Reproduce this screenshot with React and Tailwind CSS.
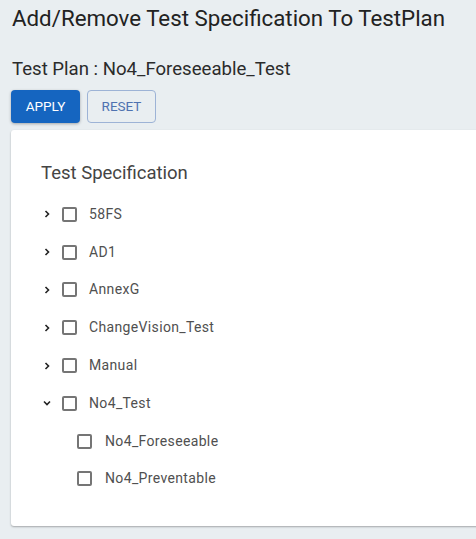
import React from "react";

const items = [
  { name: "58FS", level: 0, chevron: "right" },
  { name: "AD1", level: 0, chevron: "right" },
  { name: "AnnexG", level: 0, chevron: "right" },
  { name: "ChangeVision_Test", level: 0, chevron: "right" },
  { name: "Manual", level: 0, chevron: "right" },
  { name: "No4_Test", level: 0, chevron: "down" },
  { name: "No4_Foreseeable", level: 1 },
  { name: "No4_Preventable", level: 1 },
];

function Chevron({ dir }) {
  return (
    <svg width="10" height="10" viewBox="0 0 10 10" className="shrink-0">
      {dir === "right" ? (
        <path d="M3.5 2 L6.5 5 L3.5 8" fill="none" stroke="#222" strokeWidth="1.6" />
      ) : (
        <path d="M2 3.5 L5 6.5 L8 3.5" fill="none" stroke="#222" strokeWidth="1.6" />
      )}
    </svg>
  );
}

function Box() {
  return <span className="block w-[15px] h-[15px] border-2 border-[#757575] rounded-[2px] bg-white shrink-0" />;
}

export default function App() {
  return (
    <div
      className="w-[476px] h-[539px] overflow-hidden bg-[#e9eef1]"
      style={{ fontFamily: "Roboto, 'Noto Sans CJK JP', sans-serif" }}
    >
      <h1 className="pl-[12px] pt-[3px] text-[22.3px] leading-[30px] text-[#222] font-normal">
        Add/Remove Test Specification To TestPlan
      </h1>
      <div className="pl-[12px] mt-[24px] text-[18.6px] leading-[24px] text-[#2b2b2b]">
        Test Plan : No4_Foreseeable_Test
      </div>
      <div className="flex gap-[7px] pl-[11px] mt-[9px]">
        <button className="w-[69px] h-[33px] rounded-[4px] bg-[#1565c0] text-white text-[13.5px] font-normal shadow-[0_1px_3px_rgba(0,0,0,0.3)]">
          APPLY
        </button>
        <button className="w-[69px] h-[33px] rounded-[4px] border border-[#9db3d6] text-[#4f72b0] text-[13.5px] font-normal">
          RESET
        </button>
      </div>
      <div className="ml-[11px] mt-[7px] w-[520px] h-[396px] bg-white rounded-[3px] shadow-[0_1px_2px_rgba(0,0,0,0.3)] pt-[29px] pl-[30px]">
        <div className="text-[18.5px] leading-[28px] text-[#444]">Test Specification</div>
        <div className="mt-[8.5px] flex flex-col">
          {items.map((it) => (
            <div key={it.name} className="h-[37.8px] flex items-center">
              {it.level === 0 ? (
                <>
                  <span className="w-[21px] pl-[1px] flex items-center">
                    <Chevron dir={it.chevron} />
                  </span>
                  <Box />
                  <span className="ml-[12px] text-[14px] text-[#505050] tracking-[0.35px]">{it.name}</span>
                </>
              ) : (
                <>
                  <span className="w-[36px]" />
                  <Box />
                  <span className="ml-[13px] text-[14px] text-[#505050] tracking-[0.35px]">{it.name}</span>
                </>
              )}
            </div>
          ))}
        </div>
      </div>
    </div>
  );
}
